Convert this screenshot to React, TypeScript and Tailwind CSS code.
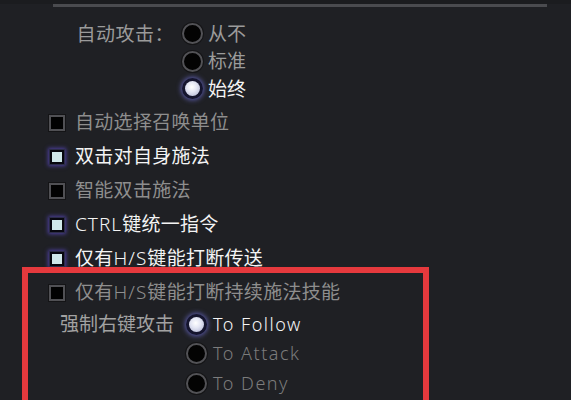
import React from 'react'

const font = { fontFamily: '"Noto Sans", "Noto Sans CJK SC", sans-serif' }

// Latin runs in the labels are drawn lighter and wider than the CJK text
function Label({ text }: { text: string }) {
  const parts = text.split(/([A-Za-z/ ]+)/).filter(Boolean)
  return (
    <>
      {parts.map((p, i) =>
        /[A-Za-z]/.test(p) ? (
          <span key={i} className="font-light tracking-[1px]">
            {p}
          </span>
        ) : (
          <span key={i}>{p}</span>
        )
      )}
    </>
  )
}

function Radio({ checked }: { checked?: boolean }) {
  if (checked) {
    return (
      <span className="flex h-[21px] w-[21px] shrink-0 items-center justify-center rounded-full bg-[#15152e] shadow-[0_0_5px_1px_#5b5ba8]">
        <span className="h-[15px] w-[15px] rounded-full bg-[radial-gradient(circle_at_45%_40%,#ffffff_0%,#e4e6f4_40%,#a9adcc_100%)]" />
      </span>
    )
  }
  return (
    <span className="box-border block h-[21px] w-[21px] shrink-0 rounded-full border-[2px] border-[#525256] bg-[#030303] shadow-[0_0_0_1px_#141416]" />
  )
}

function Check({ checked }: { checked?: boolean }) {
  if (checked) {
    return (
      <span className="flex h-[16px] w-[16px] shrink-0 items-center justify-center border border-[#2c2c48] bg-[#07070f] shadow-[0_0_4px_1px_#4d3fa0]">
        <span className="h-[10px] w-[10px] bg-[#cfe7ea]" />
      </span>
    )
  }
  return (
    <span className="box-border block h-[16px] w-[16px] shrink-0 border-[2px] border-[#505054] bg-[#020202] shadow-[0_0_0_1px_#141416]" />
  )
}

const checks = [
  { label: '自动选择召唤单位', checked: false },
  { label: '双击对自身施法', checked: true },
  { label: '智能双击施法', checked: false },
  { label: 'CTRL键统一指令', checked: true },
  { label: '仅有H/S键能打断传送', checked: true },
  { label: '仅有H/S键能打断持续施法技能', checked: false },
]

export default function App() {
  return (
    <div className="relative h-[400px] w-[571px] overflow-hidden bg-[#1f2024]" style={font}>
      {/* top divider */}
      <div className="h-[4px] bg-[#1b1c1f]" />
      <div className="ml-[53px] h-[3px] w-[494px] bg-[#4a4b4f]" />

      {/* auto attack */}
      <div className="mt-[13px] flex">
        <div className="flex h-[28px] w-[182px] items-center justify-end pr-[8px] text-[19px] tracking-[0.5px] text-[#9b9b9b]">
          自动攻击：
        </div>
        <div className="flex flex-col">
          {[
            { label: '从不', checked: false },
            { label: '标准', checked: false },
            { label: '始终', checked: true },
          ].map((r) => (
            <div key={r.label} className="flex h-[27.5px] items-center gap-[5px]">
              <Radio checked={r.checked} />
              <span className={`text-[19px] ${r.checked ? 'text-[#f4f4f4]' : 'text-[#9b9b9b]'}`}>{r.label}</span>
            </div>
          ))}
        </div>
      </div>

      {/* checkboxes */}
      <div className="mt-[3px] flex flex-col pl-[49px]">
        {checks.map((c) => (
          <div key={c.label} className="flex h-[34px] items-center gap-[10px]">
            <Check checked={c.checked} />
            <span
              className={`text-[19px] tracking-[0.3px] ${c.checked ? 'text-[#f4f4f4]' : 'text-[#8e8e8e]'}`}
            >
              <Label text={c.label} />
            </span>
          </div>
        ))}
      </div>

      {/* force right click attack */}
      <div className="flex">
        <div className="flex h-[29.5px] w-[186px] items-center pl-[60px] text-[19px] text-[#a2a2a2]">强制右键攻击</div>
        <div className="flex flex-col">
          {[
            { label: 'To Follow', checked: true },
            { label: 'To Attack', checked: false },
            { label: 'To Deny', checked: false },
          ].map((r) => (
            <div key={r.label} className="flex h-[29.5px] items-center gap-[6px]">
              <Radio checked={r.checked} />
              <span
                className={`text-[18px] font-light tracking-[1.5px] ${r.checked ? 'text-[#f4f4f4]' : 'text-[#7c7c7c]'}`}
              >
                {r.label}
              </span>
            </div>
          ))}
        </div>
      </div>

      {/* red annotation box */}
      <div className="absolute left-[22px] top-[267px] h-[150px] w-[407px] border-[6px] border-[#e5393d]" />
    </div>
  )
}
